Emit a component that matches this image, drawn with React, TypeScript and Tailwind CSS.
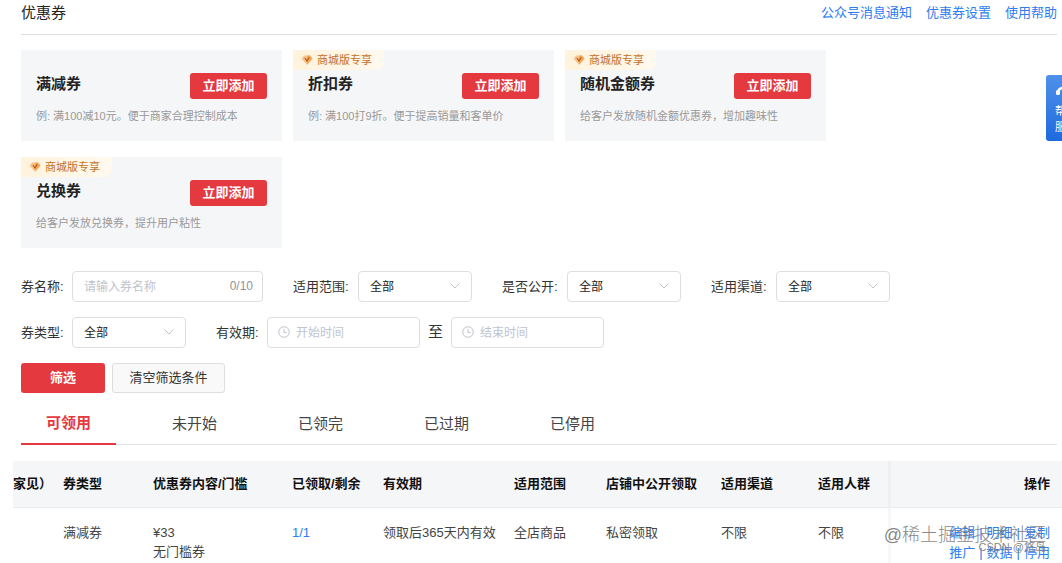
import { ReactNode } from "react";

interface Coupon {
  title: string;
  desc: string;
  mallOnly?: boolean;
}

const coupons: Coupon[] = [
  { title: "满减券", desc: "例: 满100减10元。便于商家合理控制成本" },
  { title: "折扣券", desc: "例: 满100打9折。便于提高销量和客单价", mallOnly: true },
  { title: "随机金额券", desc: "给客户发放随机金额优惠券，增加趣味性", mallOnly: true },
  { title: "兑换券", desc: "给客户发放兑换券，提升用户粘性", mallOnly: true },
];

const tabs = ["可领用", "未开始", "已领完", "已过期", "已停用"];

const columns = [
  { label: "家见）", width: "w-[40px]" },
  { label: "券类型", width: "w-[90px]" },
  { label: "优惠券内容/门槛", width: "w-[139px]" },
  { label: "已领取/剩余", width: "w-[91px]" },
  { label: "有效期", width: "w-[131px]" },
  { label: "适用范围", width: "w-[92px]" },
  { label: "店铺中公开领取", width: "w-[115px]" },
  { label: "适用渠道", width: "w-[97px]" },
  { label: "适用人群", width: "w-[81px]" },
];

const actions = [
  ["编辑", "明细", "复制"],
  ["推广", "数据", "停用"],
];

const MallBadge = () => (
  <span className="absolute left-0 top-0 flex h-5 items-center rounded-br-lg bg-linear-to-r from-[#fff3dd] to-[#fff9ee] pl-2 pr-3 text-[11px] text-[#c5711f]">
    <svg viewBox="0 0 14 12" className="mr-1 h-3 w-3">
      <path d="M3.4 0.8h7.2L13.4 4.6 7 11.6 0.6 4.6z" fill="#fbc384" />
      <path d="M7 0.8h3.6l2.8 3.8L7 11.6z" fill="#f5a85c" />
      <path
        d="M4.8 4 6.8 7.2l2.6-4"
        fill="none"
        stroke="#a8561c"
        strokeWidth="1.3"
        strokeLinecap="round"
      />
    </svg>
    商城版专享
  </span>
);

const CouponCard = ({ title, desc, mallOnly }: Coupon) => (
  <div className="relative h-[91px] w-[261px] bg-[#f5f6f8] px-[15px] pt-[23px]">
    {mallOnly && <MallBadge />}
    <div className="flex justify-between">
      <h2 className="text-[15px] leading-[22px] font-bold text-[#222]">
        {title}
      </h2>
      <button className="h-[26px] w-[77px] rounded-[3px] bg-[#e4393f] text-[13px] font-bold text-white">
        立即添加
      </button>
    </div>
    <p className="mt-[9px] text-[11px] leading-4 whitespace-nowrap text-[#999]">
      {desc}
    </p>
  </div>
);

interface FieldProps {
  id: string;
  label: string;
  labelWidth: string;
}

const Field = ({
  id,
  label,
  labelWidth,
  children,
}: FieldProps & { children: ReactNode }) => (
  <div className="flex items-center gap-2">
    <label
      htmlFor={id}
      className={`${labelWidth} text-[13px] whitespace-nowrap text-[#333]`}
    >
      {label}
    </label>
    {children}
  </div>
);

const SelectField = (props: FieldProps) => (
  <Field {...props}>
    <div className="relative">
      <select
        id={props.id}
        className="h-[31px] w-[114px] appearance-none rounded border border-[#dcdee2] bg-white pl-[11px] text-[12px] text-[#222]"
      >
        <option>全部</option>
      </select>
      <svg
        viewBox="0 0 10 6"
        className="pointer-events-none absolute top-3 right-3 h-1.5 w-2.5"
        fill="none"
        stroke="#c0c4cc"
      >
        <path d="M0.5 0.5 5 5l4.5-4.5" />
      </svg>
    </div>
  </Field>
);

const DateInput = ({ id, placeholder }: { id: string; placeholder: string }) => (
  <div className="relative">
    <svg
      viewBox="0 0 12 12"
      className="absolute top-[9px] left-[11px] h-3 w-3"
      fill="none"
      stroke="#c0c4cc"
    >
      <circle cx="6" cy="6" r="5.3" />
      <path d="M6 2.8V6.4h2.8" />
    </svg>
    <input
      id={id}
      aria-label={placeholder}
      placeholder={placeholder}
      className="h-[31px] w-[153px] rounded border border-[#dcdee2] pl-7 text-[12px] placeholder:text-[#c0c4cc]"
    />
  </div>
);

const CouponTable = () => (
  <table className="w-full table-fixed text-left text-[13px] text-[#444]">
    <thead>
      <tr className="h-[46px] border-b border-[#e8eaec] bg-[#f5f6f8] text-[#111]">
        {columns.map((col, i) => (
          <th
            key={col.label}
            className={`${col.width} font-bold whitespace-nowrap ${i === 0 ? "" : "pl-2.5"}`}
          >
            {col.label}
          </th>
        ))}
        <th className="border-l-3 border-l-[#eff0f2] pr-3 text-right font-bold">
          操作
        </th>
      </tr>
    </thead>
    <tbody>
      <tr className="align-top leading-[19px] whitespace-nowrap">
        <td />
        <td className="pt-[15px] pl-2.5">满减券</td>
        <td className="pt-[15px] pl-2.5">
          ¥33
          <br />
          无门槛券
        </td>
        <td className="pt-[15px] pl-2.5">
          <a href="#" className="text-[#2d7cf0]">
            1/1
          </a>
        </td>
        <td className="pt-[15px] pl-2.5">领取后365天内有效</td>
        <td className="pt-[15px] pl-2.5">全店商品</td>
        <td className="pt-[15px] pl-2.5">私密领取</td>
        <td className="pt-[15px] pl-2.5">不限</td>
        <td className="pt-[15px] pl-2.5">不限</td>
        <td className="border-l-3 border-[#f7f7f8] pt-[15px] pr-3 leading-5 text-[#2d7cf0]">
          {actions.map((row) => (
            <div key={row[0]} className="flex justify-end gap-1">
              {row.map((name, i) => (
                <span key={name} className="flex gap-1">
                  {i > 0 && <span>|</span>}
                  <a href="#">{name}</a>
                </span>
              ))}
            </div>
          ))}
        </td>
      </tr>
    </tbody>
  </table>
);

const App = () => {
  return (
    <div className="relative overflow-hidden bg-white font-['Liberation_Sans','Noto_Sans_CJK_SC',sans-serif]">
      <div className="pr-[5px] pl-[21px]">
        <header className="flex h-[35px] justify-between border-b border-[#dcdee2] pt-[3px]">
          <h1 className="text-[15px] leading-5 text-[#222]">优惠券</h1>
          <nav className="flex gap-[14px] text-[13px] leading-5 text-[#2d7cf0]">
            <a href="#">公众号消息通知</a>
            <a href="#">优惠券设置</a>
            <a href="#">使用帮助</a>
          </nav>
        </header>

        <section className="mt-[15px] flex max-w-[840px] flex-wrap gap-x-[11px] gap-y-4">
          {coupons.map((coupon) => (
            <CouponCard key={coupon.title} {...coupon} />
          ))}
        </section>

        <form className="mt-[23px] flex flex-col gap-[15px]">
          <div className="flex gap-[30px]">
            <Field id="name" label="券名称:" labelWidth="w-[43px]">
              <div className="relative">
                <input
                  id="name"
                  placeholder="请输入券名称"
                  className="h-[31px] w-[191px] rounded border border-[#dcdee2] pl-[11px] text-[12px] placeholder:text-[#c0c4cc]"
                />
                <span className="absolute top-[7px] right-2.5 text-[12px] leading-4 text-[#909399]">
                  0/10
                </span>
              </div>
            </Field>
            <SelectField id="scope" label="适用范围:" labelWidth="w-[57px]" />
            <SelectField id="public" label="是否公开:" labelWidth="w-[57px]" />
            <SelectField id="channel" label="适用渠道:" labelWidth="w-[57px]" />
          </div>
          <div className="flex gap-[30px]">
            <SelectField id="type" label="券类型:" labelWidth="w-[43px]" />
            <Field id="start" label="有效期:" labelWidth="w-[43px]">
              <DateInput id="start" placeholder="开始时间" />
              <span className="text-[15px] text-[#333]">至</span>
              <DateInput id="end" placeholder="结束时间" />
            </Field>
          </div>
          <div className="flex gap-[7px]">
            <button
              type="button"
              className="h-[30px] w-[84px] rounded-[3px] bg-[#e4393f] text-[13px] font-bold text-white"
            >
              筛选
            </button>
            <button
              type="button"
              className="h-[30px] w-[113px] rounded-[3px] border border-[#dcdee2] bg-[#f9f9fa] text-[13px] text-[#333]"
            >
              清空筛选条件
            </button>
          </div>
        </form>

        <div className="mt-[11px] flex gap-[31px] border-b border-[#dfe1e5]">
          {tabs.map((tab, i) => (
            <button
              key={tab}
              className={
                i === 0
                  ? "-mb-px h-[41px] w-[95px] border-b-2 border-[#e4393f] text-[15px] font-bold text-[#e4393f]"
                  : "h-10 w-[95px] text-[15px] text-[#444]"
              }
            >
              {tab}
            </button>
          ))}
        </div>
      </div>

      <div className="mt-4 pl-[13px]">
        <CouponTable />
      </div>

      <aside className="absolute top-[75px] right-0 h-[66px] w-4 overflow-hidden rounded-l-[3px] bg-linear-to-b from-[#4f90ea] to-[#1c6add] pl-[9px] text-[11px] leading-4 text-white">
        <svg
          viewBox="0 0 16 16"
          className="mt-2 mb-1 h-4 w-4"
          fill="none"
          stroke="currentColor"
          strokeWidth="2.4"
        >
          <path d="M3 8.5a5.5 6 0 0 1 10 0" />
          <rect x="1" y="7" width="4" height="5" rx="1.5" fill="currentColor" stroke="none" />
          <rect x="11" y="7" width="4" height="5" rx="1.5" fill="currentColor" stroke="none" />
        </svg>
        <p className="w-6">帮助</p>
        <p className="w-6">服务</p>
      </aside>

      <span className="pointer-events-none absolute right-4 bottom-4 text-[18px] leading-6 font-light text-[#777]/90">
        @稀土掘金技术社区
      </span>
      <span className="pointer-events-none absolute right-4 bottom-2 text-[11px] leading-4 text-[#888]">
        CSDN @悠岛
      </span>
    </div>
  );
};

export default App;
